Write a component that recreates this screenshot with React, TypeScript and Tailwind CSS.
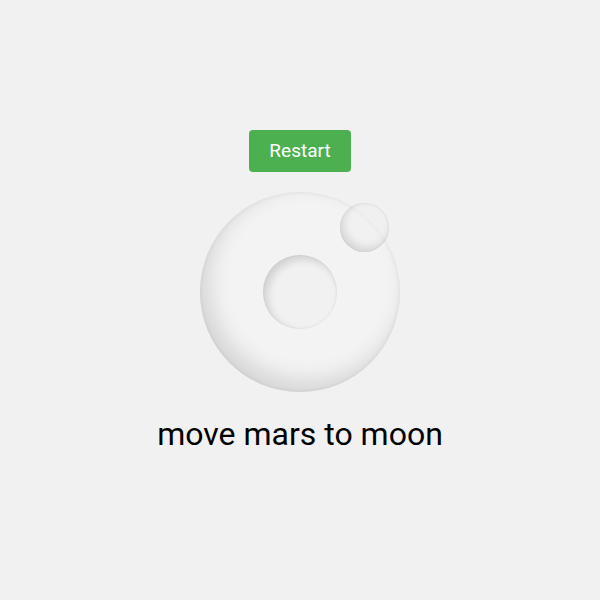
import React from "react";

const App = () => {
  return (
    <div
      className="flex h-[600px] w-[600px] flex-col items-center bg-[#f1f1f1] pt-[130px]"
      style={{ fontFamily: "Roboto, 'Liberation Sans', sans-serif" }}
    >
      <button className="h-[42px] w-[102px] rounded-[4px] bg-[#4caf50] text-[19px] text-white">
        Restart
      </button>

      <div className="relative mt-[20px] h-[200px] w-[200px]">
        {/* moon */}
        <div className="flex h-full w-full items-center justify-center rounded-full bg-[#f3f3f3] shadow-[inset_8px_-10px_22px_rgba(0,0,0,0.13),inset_0_0_4px_rgba(0,0,0,0.08)]">
          <div className="h-[74px] w-[74px] rounded-full bg-[#f1f1f1] shadow-[inset_4px_4px_8px_rgba(0,0,0,0.14),inset_0_0_2px_rgba(0,0,0,0.1)]" />
        </div>
        {/* mars */}
        <div className="absolute left-[140px] top-[11px] h-[49px] w-[49px] rounded-full bg-[rgba(240,240,240,0.45)] shadow-[inset_3px_-4px_8px_rgba(0,0,0,0.12),inset_0_0_2px_rgba(0,0,0,0.12)]" />
      </div>

      <p className="mt-[22px] text-[32px] leading-[40px] text-black">
        move mars to moon
      </p>
    </div>
  );
};

export default App;
